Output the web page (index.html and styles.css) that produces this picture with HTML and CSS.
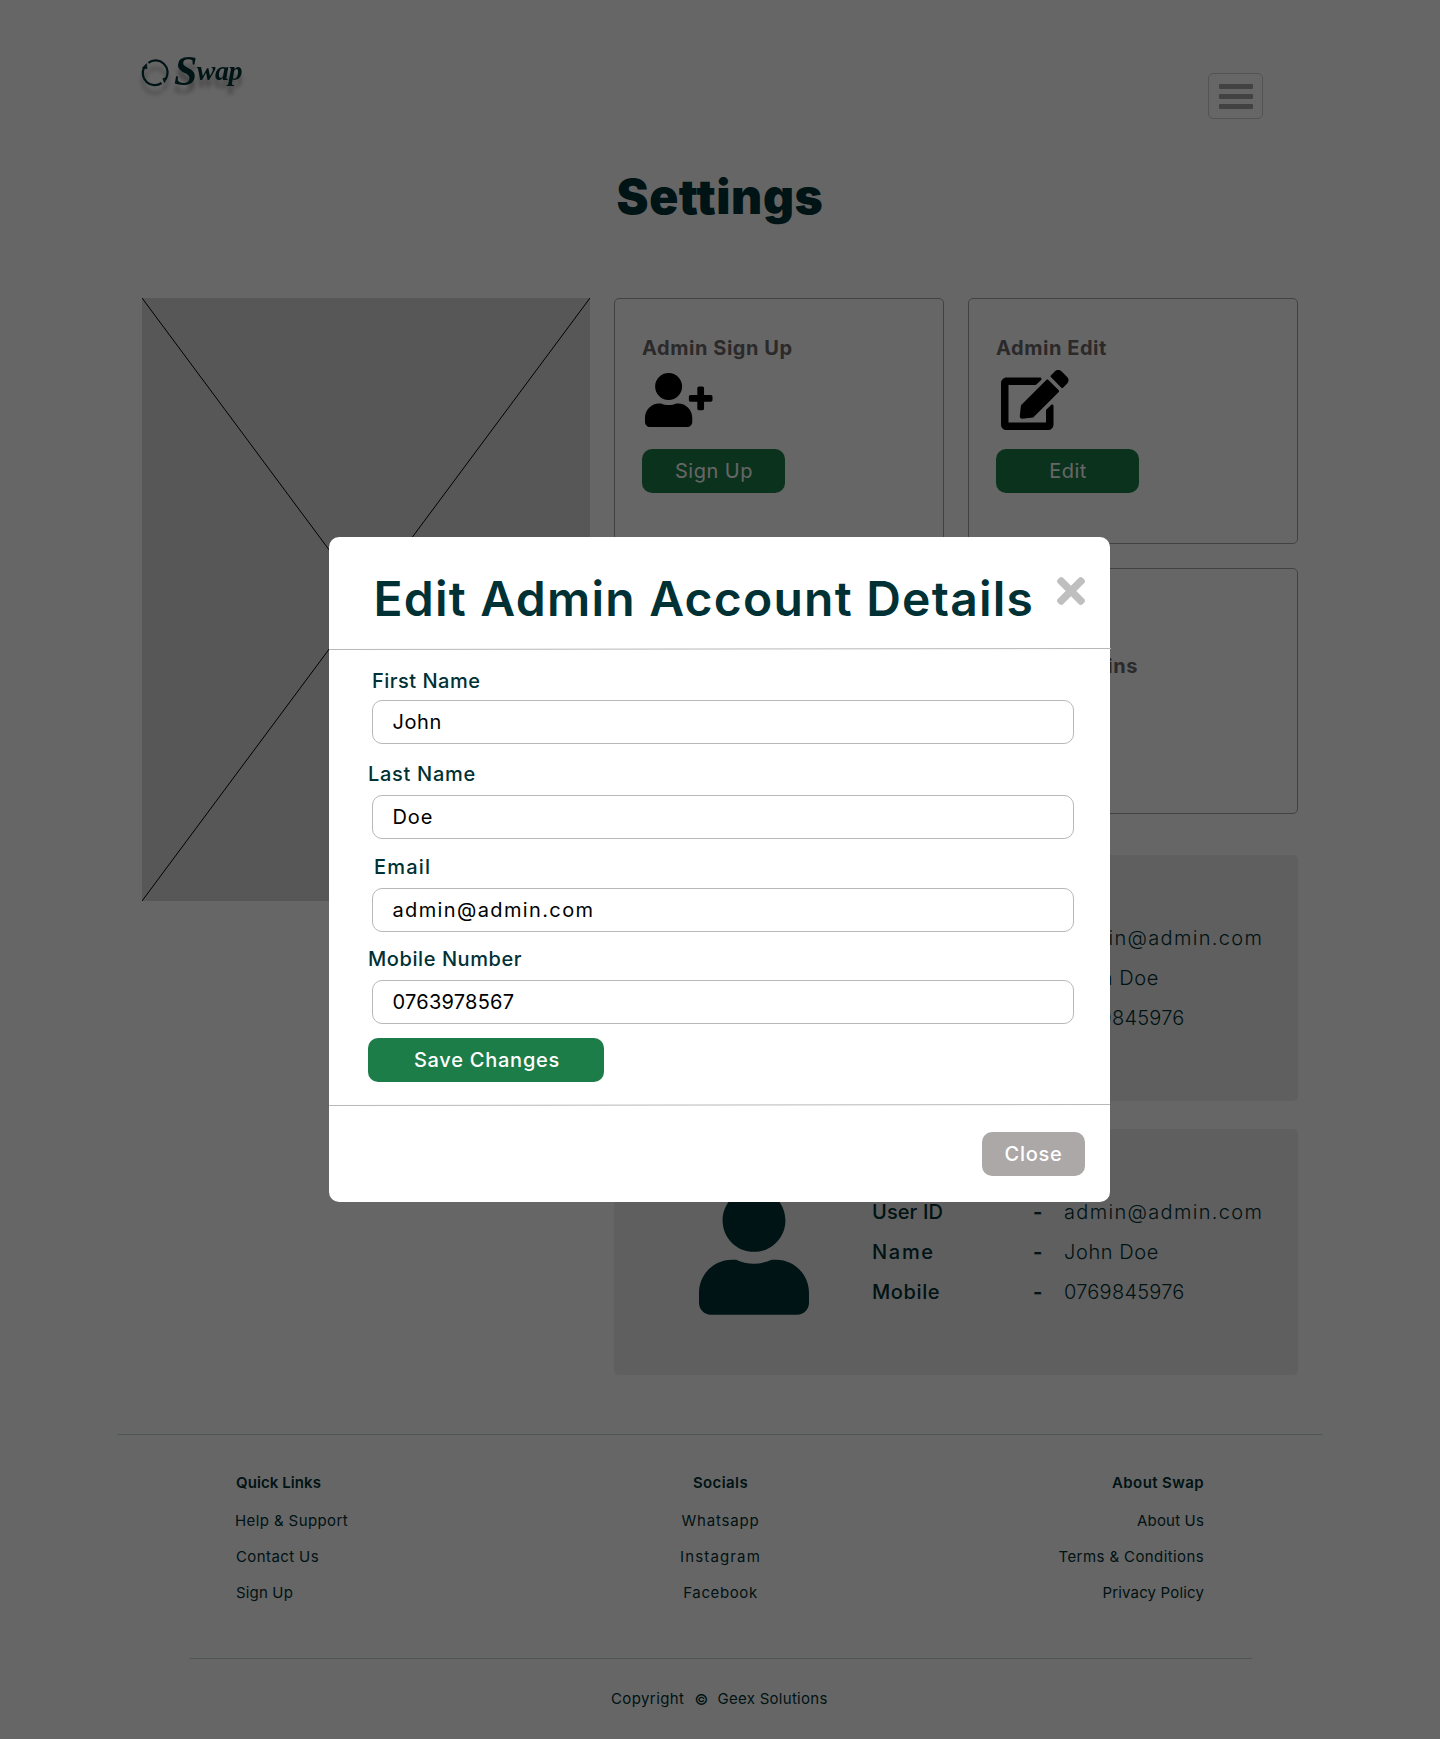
FILE: index.html
```
<!DOCTYPE html>
<html lang="en">
<head>
<meta charset="utf-8">
<title>Swap – Settings</title>
<link rel="stylesheet" href="styles.css">
</head>
<body>
<div class="page">
  <header class="topbar">
    <div class="logo">
      <svg class="logo-mark" width="28" height="28" viewBox="0 0 28 28" fill="none" stroke="#003135" stroke-width="2.200">
        <path d="M7.400 3.800A12 12 0 0 1 24.600 20"/>
        <path d="M20.600 24A12 12 0 0 1 3.200 8.400"/>
        <path d="M5.600 4.600 1.400 9l4.600.8zM26.200 18.600l-4.400 1 1.600 4.200z" fill="#003135" stroke-width=".6"/>
      </svg>
      <span class="logo-text"><span class="logo-cap">S</span>wap</span>
    </div>
    <button class="burger" type="button" aria-label="Menu"><i></i><i></i><i></i></button>
  </header>

  <h1 class="title">Settings</h1>

  <main class="content">
    <svg class="placeholder" width="448" height="603" viewBox="0 0 448 603">
      <rect width="448" height="603" fill="#d9d9d9"/>
      <path d="M0 0 448 603M448 0 0 603" stroke="#000" fill="none"/>
    </svg>
    <div class="panel">
      <section class="cards">
        <article class="card">
          <h2 class="card-title">Admin Sign Up</h2>
          <div class="card-icon icon-add">
            <svg width="67.5" height="54" viewBox="0 0 640 512"><path d="M624 208h-64v-64c0-8.800-7.200-16-16-16h-32c-8.800 0-16 7.200-16 16v64h-64c-8.800 0-16 7.200-16 16v32c0 8.800 7.200 16 16 16h64v64c0 8.800 7.200 16 16 16h32c8.800 0 16-7.200 16-16v-64h64c8.800 0 16-7.200 16-16v-32c0-8.800-7.200-16-16-16zm-400 48c70.700 0 128-57.300 128-128S294.700 0 224 0 96 57.300 96 128s57.300 128 128 128zm89.600 32h-16.700c-22.200 10.200-46.900 16-72.900 16s-50.600-5.800-72.900-16h-16.700C60.200 288 0 348.200 0 422.400V464c0 26.500 21.500 48 48 48h352c26.500 0 48-21.500 48-48v-41.600c0-74.200-60.200-134.400-134.400-134.400z"/></svg>
          </div>
          <button class="btn btn-card" type="button">Sign Up</button>
        </article>
        <article class="card">
          <h2 class="card-title">Admin Edit</h2>
          <div class="card-icon icon-edit">
            <svg width="67.5" height="60" viewBox="0 0 576 512"><path d="M402.600 83.200l90.200 90.200c3.800 3.800 3.800 10 0 13.800L274.400 405.600l-92.800 10.300c-12.400 1.400-22.900-9.100-21.500-21.500l10.300-92.800L388.800 83.200c3.800-3.800 10-3.800 13.800 0zm162-22.900l-48.800-48.800c-15.200-15.200-39.900-15.200-55.200 0l-35.400 35.400c-3.800 3.800-3.800 10 0 13.800l90.200 90.200c3.800 3.800 10 3.800 13.800 0l35.400-35.400c15.200-15.300 15.200-40 0-55.200zM384 346.200V448H64V128h229.800c3.200 0 6.200-1.300 8.500-3.500l40-40c7.600-7.600 2.200-20.500-8.500-20.500H48C21.500 64 0 85.500 0 112v352c0 26.500 21.500 48 48 48h352c26.500 0 48-21.500 48-48V306.200c0-10.700-12.900-16-20.500-8.500l-40 40c-2.200 2.300-3.500 5.300-3.500 8.500z"/></svg>
          </div>
          <button class="btn btn-card" type="button">Edit</button>
        </article>
        <article class="card"></article>
        <article class="card card-stat">
          <h2 class="card-title">Admins</h2>
        </article>
      </section>

      <section class="details">
        <svg class="avatar" width="110" height="125.7" viewBox="0 0 448 512"><path d="M224 256c70.700 0 128-57.300 128-128S294.700 0 224 0 96 57.300 96 128s57.300 128 128 128zm89.600 32h-16.700c-22.200 10.200-46.900 16-72.900 16s-50.600-5.800-72.900-16h-16.700C60.200 288 0 348.200 0 422.400V464c0 26.500 21.500 48 48 48h352c26.500 0 48-21.500 48-48v-41.600c0-74.200-60.200-134.400-134.400-134.400z"/></svg>
        <dl class="facts">
          <dt class="tight">User ID</dt><dd class="dash">-</dd><dd class="mail">admin@admin.com</dd>
          <dt class="loose">Name</dt><dd class="dash">-</dd><dd>John Doe</dd>
          <dt>Mobile</dt><dd class="dash">-</dd><dd class="digits">0769845976</dd>
        </dl>
      </section>
      <section class="details">
        <svg class="avatar" width="110" height="125.7" viewBox="0 0 448 512"><path d="M224 256c70.700 0 128-57.300 128-128S294.700 0 224 0 96 57.300 96 128s57.300 128 128 128zm89.600 32h-16.700c-22.200 10.200-46.900 16-72.900 16s-50.600-5.800-72.900-16h-16.700C60.200 288 0 348.200 0 422.400V464c0 26.500 21.500 48 48 48h352c26.500 0 48-21.500 48-48v-41.600c0-74.200-60.200-134.400-134.400-134.400z"/></svg>
        <dl class="facts">
          <dt class="tight">User ID</dt><dd class="dash">-</dd><dd class="mail">admin@admin.com</dd>
          <dt class="loose">Name</dt><dd class="dash">-</dd><dd>John Doe</dd>
          <dt>Mobile</dt><dd class="dash">-</dd><dd class="digits">0769845976</dd>
        </dl>
      </section>
    </div>
  </main>

  <footer class="footer">
    <div class="links">
      <ul class="col">
        <li class="col-head quick">Quick Links</li>
        <li>Help &amp; Support</li>
        <li class="nudge">Contact Us</li>
        <li class="nudge snug">Sign Up</li>
      </ul>
      <ul class="col col-mid">
        <li class="col-head">Socials</li>
        <li class="airy">Whatsapp</li>
        <li class="airier">Instagram</li>
        <li class="open">Facebook</li>
      </ul>
      <ul class="col col-end">
        <li class="col-head">About Swap</li>
        <li class="snug">About Us</li>
        <li>Terms &amp; Conditions</li>
        <li class="snug">Privacy Policy</li>
      </ul>
    </div>
    <div class="copyright"><span>Copyright</span><span class="mark">©</span><span class="owner">Geex Solutions</span></div>
  </footer>
</div>

<div class="overlay">
  <div class="modal" role="dialog" aria-modal="true">
    <div class="modal-head">
      <h2 class="modal-title">Edit Admin Account Details</h2>
      <svg class="modal-x" width="28" height="28" viewBox="0 80 352 352"><path d="M242.720 256l100.070-100.070c12.280-12.280 12.280-32.190 0-44.480l-22.240-22.240c-12.280-12.280-32.190-12.280-44.480 0L176 189.280 75.930 89.210c-12.280-12.280-32.190-12.280-44.480 0L9.210 111.450c-12.280 12.280-12.280 32.190 0 44.480L109.280 256 9.210 356.070c-12.280 12.280-12.280 32.190 0 44.480l22.240 22.240c12.280 12.280 32.200 12.280 44.480 0L176 322.720l100.070 100.070c12.280 12.280 32.200 12.280 44.480 0l22.240-22.240c12.280-12.280 12.280-32.190 0-44.480L242.720 256z"/></svg>
    </div>
    <svg class="rule" width="782" height="3"><path d="M0 1.500 782 .5"/></svg>
    <form class="form">
      <div class="field first"><label>First Name</label><div class="input">John</div></div>
      <div class="field last"><label>Last Name</label><div class="input doe">Doe</div></div>
      <div class="field email"><label>Email</label><div class="input mail">admin@admin.com</div></div>
      <div class="field mobile"><label>Mobile Number</label><div class="input digits">0763978567</div></div>
      <button class="btn btn-save" type="button">Save Changes</button>
    </form>
    <svg class="rule" width="781" height="3"><path d="M0 1.500 781 .5"/></svg>
    <div class="modal-foot"><button class="btn btn-close" type="button">Close</button></div>
  </div>
</div>
</body>
</html>
```
FILE: styles.css
```
* { box-sizing: border-box; margin: 0; padding: 0; }

body {
  position: relative;
  width: 1440px;
  height: 1739px;
  background: #fff;
  color: #003135;
  font: 20px/30px Inter, "Open Sans", sans-serif;
  letter-spacing: .6px;
  overflow: hidden;
}

svg { display: block; flex: none; }
ul { list-style: none; }

/* top bar */
.topbar {
  display: flex;
  justify-content: space-between;
  align-items: flex-start;
  height: 167px;
  padding: 55px 177px 0 141px;
}
.logo {
  display: flex;
  filter: drop-shadow(0 8px 2px rgba(0, 0, 0, .3));
}
.logo-mark { margin-top: 4px; }
.logo-text {
  margin-left: 5px;
  font: italic bold 28px/32px "Liberation Serif", serif;
  letter-spacing: -.5px;
}
.logo-cap { font-size: 42px; line-height: 1px; letter-spacing: -.5px; vertical-align: -5px; }
.burger {
  display: flex;
  flex-direction: column;
  align-items: center;
  gap: 5.500px;
  width: 55px;
  height: 46px;
  margin-top: 18px;
  padding-top: 10px;
  background: none;
  border: 1px solid #d0d0d0;
  border-radius: 5px;
}
.burger i { width: 34px; height: 4.500px; border-radius: 1px; background: #a6a6a6; }

.title {
  font-size: 48px;
  font-weight: 900;
  line-height: 60px;
  letter-spacing: .6px;
  text-align: center;
}

/* main area */
.content {
  display: flex;
  gap: 24px;
  padding: 71px 142px 0;
}
.panel { width: 684px; }
.cards {
  display: grid;
  grid-template-columns: 330px 330px;
  grid-auto-rows: 246px;
  gap: 24px;
  margin-bottom: 41px;
}
.card {
  padding: 34px 27px 0;
  border: 1px solid #a5a5a5;
  border-radius: 5px;
}
.card-title { font-size: 20px; font-weight: 700; line-height: 30px; letter-spacing: .55px; color: #6b686a; }
.card-icon {
  display: flex;
  align-items: center;
  height: 60px;
  margin: 7px 0 19px;
}
.icon-add { padding-left: 3px; }
.icon-edit { padding-left: 5px; }
.card-stat { padding-top: 82px; }
.card-stat .card-title { width: 142px; text-align: right; }

.btn {
  display: block;
  height: 44px;
  border: 0;
  border-radius: 10px;
  background: #1c7d48;
  color: #fff;
  font: 500 20px/44px Inter, "Open Sans", sans-serif;
  letter-spacing: .5px;
  text-align: center;
}
.btn-card { width: 143px; font-weight: 400; text-indent: 1px; }

.details {
  display: flex;
  align-items: center;
  height: 246px;
  padding-left: 85px;
  border-radius: 5px;
  background: #eee;
}
.details + .details { margin-top: 28px; }
.avatar { fill: #003135; }
.facts {
  display: grid;
  grid-template-columns: 161px 31px auto;
  margin-left: 63px;
  font-weight: 300;
  line-height: 40px;
}
.facts dt { font-weight: 500; }
.facts .dash { font-weight: 700; }
.facts .tight { letter-spacing: .1px; }
.facts .loose { letter-spacing: 1.700px; }
.mail { letter-spacing: 1.370px; }
.facts .mail { letter-spacing: 1.320px; }
.digits { letter-spacing: .25px; }

/* footer */
.footer { margin: 59px 118px 0; border-top: 1px solid #c4d4d5; font-size: 15px; letter-spacing: .4px; }
.links {
  display: grid;
  grid-template-columns: 1fr 1fr 1fr;
  height: 224px;
  margin: 0 70px 0 72px;
  padding: 30px 48px 0 45px;
  border-bottom: 1px solid #c4d4d5;
  line-height: 36px;
}
.col-head { margin-bottom: 2px; font-weight: 600; }
.quick { padding-left: 1px; letter-spacing: .08px; }
.nudge { padding-left: 1px; }
.snug { letter-spacing: .16px; }
.airy { letter-spacing: .83px; }
.airier { letter-spacing: 1.140px; }
.open { letter-spacing: .6px; }
.col-mid { text-align: center; text-indent: 2px; }
.col-end { text-align: right; }
.copyright { display: flex; padding: 25px 0 0 493px; }
.mark { margin: 1px 0 -1px 10px; font-weight: 500; }
.owner { margin-left: 9px; letter-spacing: .28px; }

/* modal */
.overlay {
  position: absolute;
  inset: 0;
  padding: 537px 0 0 329px;
  background: rgba(0, 0, 0, .6);
}
.modal { width: 781px; height: 665px; border-radius: 10px; background: #fff; }
.modal-head {
  display: flex;
  justify-content: space-between;
  height: 111px;
  padding: 32px 25px 0 44.500px;
}
.modal-title { font-size: 48px; font-weight: 600; line-height: 59px; letter-spacing: 1.240px; white-space: nowrap; }
.modal-x { margin-top: 8px; fill: #bfbfbf; }
.rule { overflow: visible; stroke: #b8b8b8; }
.form { height: 453px; padding: 0 36px 0 39px; }
.field { padding-top: 16px; }
.field label { display: block; margin-bottom: 7px; font-weight: 500; line-height: 28px; }
.first label { margin: 0 0 5px 4px; letter-spacing: .5px; }
.last label { letter-spacing: .7px; }
.email { padding-top: 14px; }
.email label { margin-left: 6px; letter-spacing: 1.200px; }
.mobile { padding-top: 13px; }
.mobile label { letter-spacing: .58px; }
.input {
  height: 44px;
  margin-left: 4px;
  padding-left: 19.500px;
  border: 1px solid #b8b8b8;
  border-radius: 10px;
  color: #000;
  line-height: 42px;
}
.doe { letter-spacing: .9px; }
.btn-save { width: 236px; margin-top: 14px; letter-spacing: .75px; text-indent: 2px; }
.modal-foot { display: flex; justify-content: flex-end; padding: 25px 25px 0 0; }
.btn-close { width: 103px; background: #aca8a8; letter-spacing: .75px; }
```
